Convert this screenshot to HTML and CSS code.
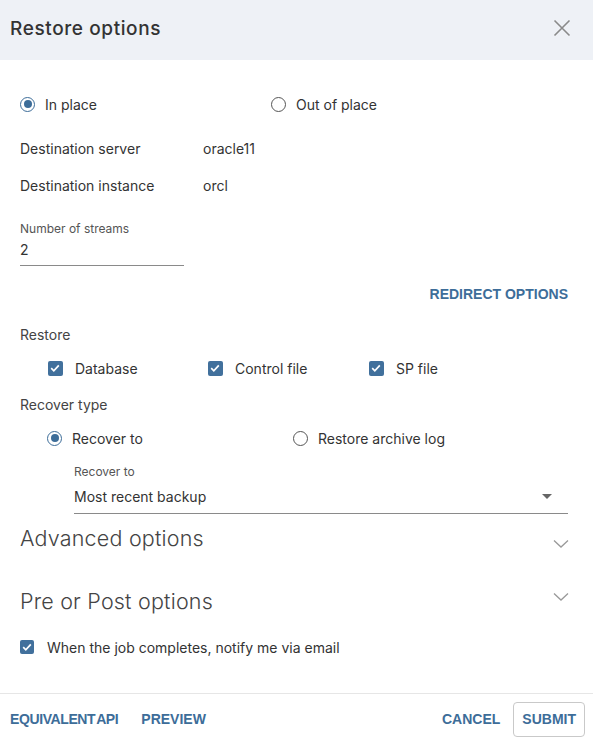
FILE: index.html
```html
<!DOCTYPE html>
<html>
<head>
<meta charset="utf-8">
<link rel="stylesheet" href="styles.css">
</head>
<body>
<div class="dialog">
  <div class="header">
    <div class="title">Restore options</div>
    <svg class="close" width="20" height="20" viewBox="0 0 20 20"><path d="M2.5 2.5 L17.5 17.5 M17.5 2.5 L2.5 17.5" stroke="#8a8a8a" stroke-width="1.6" fill="none"/></svg>
  </div>
  <div class="body">
    <div class="row radios top">
      <label class="opt"><span class="radio on"></span>In place</label>
      <label class="opt"><span class="radio"></span>Out of place</label>
    </div>
    <div class="row kv r1"><span class="k">Destination server</span><span class="v">oracle11</span></div>
    <div class="row kv r2"><span class="k">Destination instance</span><span class="v">orcl</span></div>
    <div class="field streams">
      <div class="flabel">Number of streams</div>
      <div class="fvalue">2</div>
    </div>
    <div class="row link-row"><span class="link">REDIRECT OPTIONS</span></div>
    <div class="row section s-restore">Restore</div>
    <div class="row checks">
      <label class="opt"><span class="cb"><svg viewBox="0 0 14 14" width="14" height="14"><path d="M3.2 7.2 L5.8 9.8 L10.8 4.4" stroke="#fff" stroke-width="1.7" fill="none"/></svg></span>Database</label>
      <label class="opt"><span class="cb"><svg viewBox="0 0 14 14" width="14" height="14"><path d="M3.2 7.2 L5.8 9.8 L10.8 4.4" stroke="#fff" stroke-width="1.7" fill="none"/></svg></span>Control file</label>
      <label class="opt"><span class="cb"><svg viewBox="0 0 14 14" width="14" height="14"><path d="M3.2 7.2 L5.8 9.8 L10.8 4.4" stroke="#fff" stroke-width="1.7" fill="none"/></svg></span>SP file</label>
    </div>
    <div class="row section s-recover">Recover type</div>
    <div class="row radios2">
      <label class="opt"><span class="radio on"></span>Recover to</label>
      <label class="opt"><span class="radio"></span>Restore archive log</label>
    </div>
    <div class="field recover">
      <div class="flabel">Recover to</div>
      <div class="fvalue select"><span>Most recent backup</span><svg width="10" height="6" viewBox="0 0 10 6"><path d="M0 0 H10 L5 5 Z" fill="#666"/></svg></div>
    </div>
    <div class="acc adv"><span>Advanced options</span><svg width="16" height="10" viewBox="0 0 16 10"><path d="M1 1.5 L8 8 L15 1.5" stroke="#999" stroke-width="1.3" fill="none"/></svg></div>
    <div class="acc prepost"><span>Pre or Post options</span><svg width="16" height="10" viewBox="0 0 16 10"><path d="M1 1.5 L8 8 L15 1.5" stroke="#999" stroke-width="1.3" fill="none"/></svg></div>
    <div class="row notify">
      <label class="opt"><span class="cb"><svg viewBox="0 0 14 14" width="14" height="14"><path d="M3.2 7.2 L5.8 9.8 L10.8 4.4" stroke="#fff" stroke-width="1.7" fill="none"/></svg></span>When the job completes, notify me via email</label>
    </div>
  </div>
  <div class="footer">
    <div class="left"><span class="btn api">EQUIVALENT API</span><span class="btn">PREVIEW</span></div>
    <div class="right"><span class="btn">CANCEL</span><span class="btn outlined">SUBMIT</span></div>
  </div>
</div>
</body>
</html>
```

FILE: styles.css
```css
* { box-sizing: border-box; }
html, body { margin: 0; padding: 0; background: #fff; }
body { font-family: Inter, "Noto Sans", sans-serif; color: #333; font-size: 14px; }
.dialog { width: 593px; height: 744px; display: flex; flex-direction: column; }
.header { height: 60px; background: #eef1f6; display: flex; align-items: center; justify-content: space-between; padding: 0 21px 4px 10px; flex-shrink: 0; }
.title { font-size: 19px; color: #333; font-weight: 500; letter-spacing: 0.6px; }
.close { display: block; }
.body { flex: 1; padding: 0 25px 0 20px; display: flex; flex-direction: column; }
.row { display: flex; align-items: center; height: 24px; }
.opt { display: flex; align-items: center; color: #333; }
.radio { width: 15px; height: 15px; border-radius: 50%; border: 1.5px solid #555; display: inline-flex; align-items: center; justify-content: center; margin-right: 10px; flex-shrink: 0; }
.radio.on { border-color: #3d6d99; }
.radio.on::after { content: ""; width: 8px; height: 8px; border-radius: 50%; background: #3d6d99; }
.cb { width: 15px; height: 15px; border-radius: 2px; background: #41709c; display: inline-flex; margin-right: 12px; flex-shrink: 0; }
.cb svg { display: block; }
.radios { margin-top: 32px; }
.radios .opt:first-child { width: 251px; }
.kv .k { width: 183px; }
.r1 { margin-top: 20px; }
.r2 { margin-top: 13px; }
.field { display: flex; flex-direction: column; }
.flabel { font-size: 12px; color: #555; height: 16px; line-height: 16px; }
.fvalue { font-size: 14px; color: #333; border-bottom: 1px solid #8a8a8a; }
.streams { margin-top: 24px; width: 164px; }
.streams .fvalue { height: 29px; line-height: 24px; padding-top: 1px; }
.link-row { justify-content: flex-end; margin-top: 16px; }
.link, .btn { font-family: "Liberation Sans", Arial, sans-serif; font-weight: 700; font-size: 14px; color: #3d6d99; }
.btn.api { word-spacing: -2px; letter-spacing: -0.4px; }
.section { color: #444; }
.s-restore { margin-top: 16px; }
.checks { margin-top: 10px; padding-left: 28px; }
.checks .opt:nth-child(1) { width: 160px; }
.checks .opt:nth-child(2) { width: 161px; }
.s-recover { margin-top: 12px; }
.radios2 { margin-top: 10px; padding-left: 27px; }
.radios2 .opt:first-child { width: 246px; }
.recover { margin-top: 14px; margin-left: 54px; }
.recover .flabel { height: 15px; line-height: 15px; }
.select { display: flex; align-items: center; justify-content: space-between; padding-right: 16px; padding-top: 1px; height: 35px; }
.acc { display: flex; align-items: center; justify-content: space-between; font-size: 21.5px; font-weight: 300; color: #444; height: 30px; letter-spacing: 0.2px; }
.acc svg { margin-right: -1px; }
.adv { margin-top: 9px; }
.adv svg { margin-top: 12px; }
.prepost { margin-top: 33px; }
.prepost svg { margin-top: -8px; }
.notify { margin-top: 19px; }
.notify .cb { width: 14px; height: 14px; margin-right: 13px; }
.footer { height: 51px; border-top: 1px solid #e6e6e6; display: flex; align-items: center; justify-content: space-between; padding: 0 8px 0 10px; flex-shrink: 0; }
.footer .left, .footer .right { display: flex; align-items: center; }
.footer .left .btn + .btn { margin-left: 23px; }
.footer .right .btn.outlined { margin-left: 13px; border: 1px solid #c9c9c9; border-radius: 4px; height: 35px; padding: 0 8px; display: flex; align-items: center; }
```
